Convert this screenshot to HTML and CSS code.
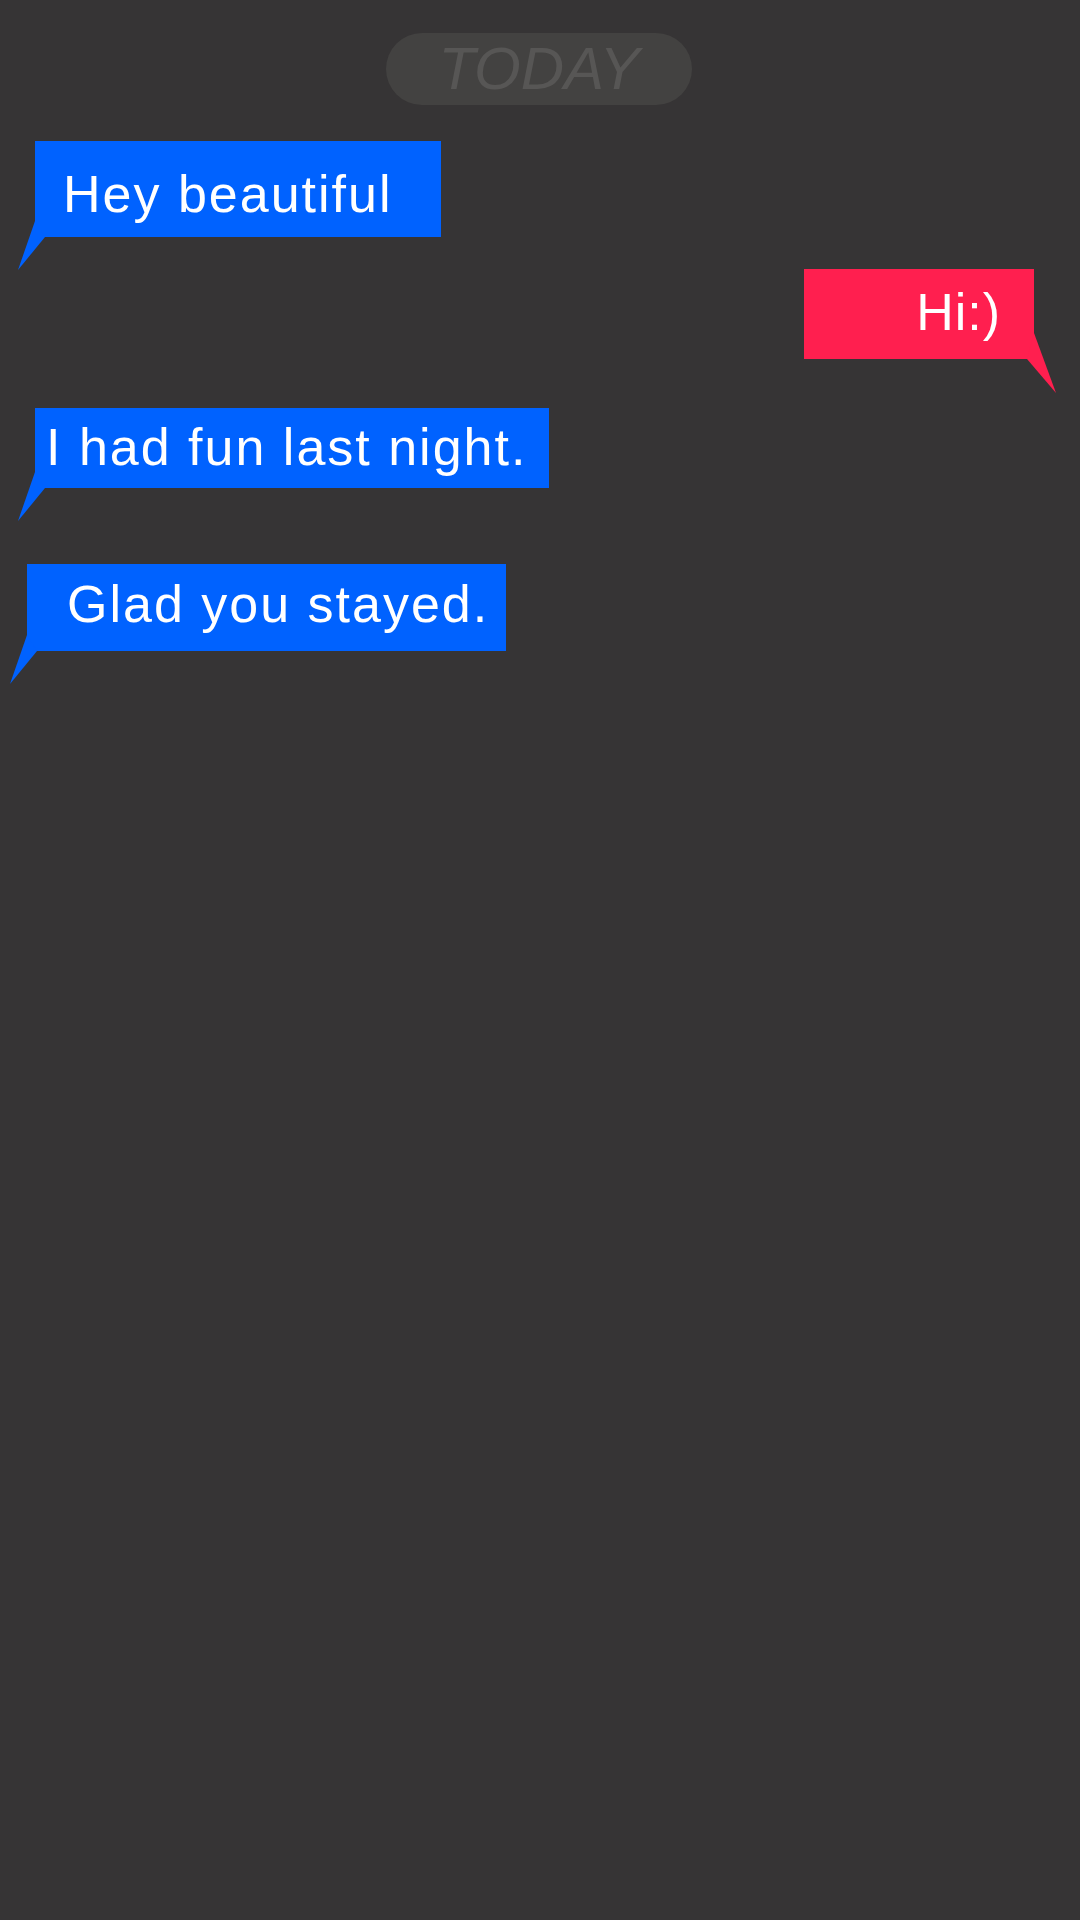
FILE: index.html
```html
<!DOCTYPE html>
<html lang="en">
<head>
<meta charset="utf-8">
<title>Chat</title>
<link rel="stylesheet" href="styles.css">
</head>
<body>
<main class="chat">
  <div class="day"><span class="day-pill">TODAY</span></div>
  <div class="msg msg-in m1"><p class="bubble">Hey beautiful</p></div>
  <div class="msg msg-out m2"><p class="bubble">Hi:)</p></div>
  <div class="msg msg-in m3"><p class="bubble">I had fun last night.</p></div>
  <div class="msg msg-in m4"><p class="bubble">Glad you stayed.</p></div>
</main>
</body>
</html>
```
FILE: styles.css
```css
html, body {
  margin: 0;
  padding: 0;
  background: #363435;
  width: 1080px;
  height: 1920px;
}
.chat {
  display: flex;
  flex-direction: column;
  font-family: "Liberation Sans", Arial, sans-serif;
  padding-top: 33px;
}
.day {
  display: flex;
  justify-content: center;
}
.day-pill {
  display: block;
  background: #434241;
  color: #575655;
  font-style: italic;
  font-size: 60px;
  line-height: 72px;
  height: 72px;
  padding: 0 52px;
  border-radius: 36px;
  margin-left: -2px;
}
.msg {
  display: flex;
}
.msg-in { justify-content: flex-start; }
.msg-out { justify-content: flex-end; }
.bubble {
  position: relative;
  margin: 0;
  font-size: 52px;
  line-height: 52px;
  color: #ffffff;
  letter-spacing: 2px;
  white-space: nowrap;
}
.msg-in .bubble { background: #0062ff; }
.msg-out .bubble { background: #ff1f4f; }
.msg-in .bubble::before {
  content: "";
  position: absolute;
  left: -17px;
  bottom: -33px;
  width: 27px;
  height: 49px;
  background: inherit;
  clip-path: polygon(17px 0, 0 49px, 27px 16px);
}
.msg-out .bubble::after {
  content: "";
  position: absolute;
  right: -22px;
  bottom: -34px;
  width: 29px;
  height: 60px;
  background: inherit;
  clip-path: polygon(7px 0, 29px 60px, 0 26px);
}
.m1 { margin-top: 36px; padding-left: 35px; }
.m1 .bubble { padding: 27px 48px 17px 28px; }
.m2 { margin-top: 32px; padding-right: 46px; }
.m2 .bubble { padding: 17px 33px 21px 112px; letter-spacing: 1px; }
.m3 { margin-top: 49px; padding-left: 35px; }
.m3 .bubble { padding: 13px 22px 15px 11px; }
.m4 { margin-top: 76px; padding-left: 27px; }
.m4 .bubble { padding: 14px 17px 21px 40px; }
```
